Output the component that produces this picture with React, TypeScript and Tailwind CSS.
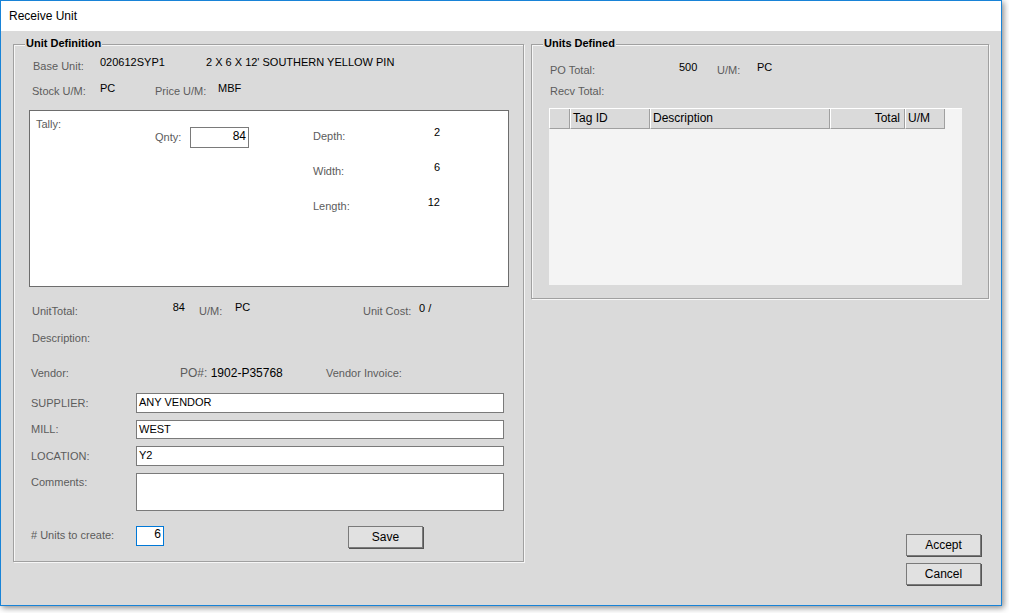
import React from "react";

const LABEL = "text-[#5c5c5c]";

function GroupBox({ title, className = "", children }: { title: string; className?: string; children: React.ReactNode }) {
  return (
    <div className={`relative border border-[#a0a0a0] shadow-[inset_1px_1px_0_#f6f6f6,1px_1px_0_#f6f6f6] ${className}`}>
      <span className="absolute left-[11px] top-[-8px] px-[1px] bg-[#dadada] font-bold text-black">{title}</span>
      {children}
    </div>
  );
}

function TextBox({ value, className = "", align = "left" }: { value?: string; className?: string; align?: "left" | "right" }) {
  return (
    <div
      className={`bg-white border border-[#7a7a7a] px-[2px] pt-[2px] text-black ${align === "right" ? "text-right" : ""} ${className}`}
    >
      {value}
    </div>
  );
}

function Button({ label, className = "" }: { label: string; className?: string }) {
  return (
    <button className={`w-[75px] bg-[#e1e1e1] border border-[#7a7a7a] shadow-[1px_1px_0_#555] text-[12px] text-black flex items-center justify-center ${className}`}>
      {label}
    </button>
  );
}

function FieldRow({ label, value, h, mt = "" }: { label: string; value?: string; h: string; mt?: string }) {
  return (
    <div className={`flex items-center pl-[17px] ${mt}`}>
      <span className={`${LABEL} w-[105px]`}>{label}</span>
      <TextBox value={value} className={`w-[368px] ${h}`} />
    </div>
  );
}

function UnitDefinition() {
  return (
    <GroupBox title="Unit Definition" className="w-[511px] h-[518px] pt-[11px]">
      {/* base unit */}
      <div className="flex items-start h-[26px] pl-[19px]">
        <span className={`${LABEL} w-[67px] mt-[4px]`}>Base Unit:</span>
        <span className="w-[106px]">020612SYP1</span>
        <span className="whitespace-nowrap">2 X 6 X 12' SOUTHERN YELLOW PIN</span>
      </div>
      <div className="flex items-start h-[28px] pl-[18px]">
        <span className={`${LABEL} w-[68px] mt-[3px]`}>Stock U/M:</span>
        <span className="w-[55px]">PC</span>
        <span className={`${LABEL} w-[63px] mt-[3px]`}>Price U/M:</span>
        <span>MBF</span>
      </div>

      {/* tally panel */}
      <div className="ml-[15px] w-[480px] h-[177px] bg-white border border-[#6d6d6d] flex items-start">
        <span className={`${LABEL} w-[125px] pl-[6px] pt-[7px]`}>Tally:</span>
        <div className="flex items-center pt-[16px]">
          <span className={`${LABEL} w-[35px]`}>Qnty:</span>
          <TextBox value="84" align="right" className="w-[59px] h-[21px] text-[12px] pt-[1px]" />
        </div>
        <div className="ml-[64px] pt-[15px] flex flex-col">
          {[
            ["Depth:", "2"],
            ["Width:", "6"],
            ["Length:", "12"],
          ].map(([l, v]) => (
            <div key={l} className="flex justify-between items-start w-[127px] h-[35px]">
              <span className={`${LABEL} mt-[4px]`}>{l}</span>
              <span>{v}</span>
            </div>
          ))}
        </div>
      </div>

      {/* totals */}
      <div className="flex items-start h-[31px] mt-[14px] pl-[18px]">
        <span className={`${LABEL} w-[133px] mt-[4px]`}>UnitTotal:</span>
        <span className="w-[20px] text-right">84</span>
        <span className={`${LABEL} w-[36px] ml-[14px] mt-[4px]`}>U/M:</span>
        <span className="w-[128px]">PC</span>
        <span className={`${LABEL} w-[56px] mt-[4px]`}>Unit Cost:</span>
        <span className="mt-[1px]">0 /</span>
      </div>
      <div className="h-[35px] pl-[18px]">
        <span className={LABEL}>Description:</span>
      </div>
      <div className="flex items-start h-[26px] pl-[17px]">
        <span className={`${LABEL} w-[149px]`}>Vendor:</span>
        <span className="w-[146px] text-[12px] leading-[13px]">
          <span className={LABEL}>PO#: </span>1902-P35768
        </span>
        <span className={LABEL}>Vendor Invoice:</span>
      </div>

      {/* reference fields */}
      <FieldRow label="SUPPLIER:" value="ANY VENDOR" h="h-[20px]" />
      <FieldRow label="MILL:" value="WEST" h="h-[19px]" mt="mt-[7px]" />
      <FieldRow label="LOCATION:" value="Y2" h="h-[20px]" mt="mt-[7px]" />
      <div className="flex items-start pl-[17px] mt-[7px]">
        <span className={`${LABEL} w-[105px] mt-[3px]`}>Comments:</span>
        <TextBox className="w-[368px] h-[38px]" />
      </div>

      <div className="flex items-start h-[23px] mt-[15px] pl-[17px]">
        <span className={`${LABEL} w-[105px] mt-[3px]`}>
          # Units to create:
        </span>
        <div className="w-[28px] h-[20px] bg-white border border-[#0078d7] text-right pr-[2px] pt-[1px] text-[12px]">6</div>
        <Button label="Save" className="ml-[184px] h-[22px]" />
      </div>
    </GroupBox>
  );
}

const COLUMNS = [
  { label: "", w: "w-[21px]", align: "" },
  { label: "Tag ID", w: "w-[80px]", align: "" },
  { label: "Description", w: "w-[180px]", align: "" },
  { label: "Total", w: "w-[75px]", align: "text-right pr-[4px]" },
  { label: "U/M", w: "w-[40px]", align: "" },
];

function UnitsDefined() {
  return (
    <GroupBox title="Units Defined" className="w-[458px] h-[255px] pt-[16px]">
      <div className="flex items-start h-[21px] pl-[18px]">
        <span className={`${LABEL} w-[129px] mt-[3px]`}>PO Total:</span>
        <span className="w-[38px]">500</span>
        <span className={`${LABEL} w-[40px] mt-[3px]`}>U/M:</span>
        <span>PC</span>
      </div>
      <div className="h-[26px] pl-[18px] pt-[3px]">
        <span className={LABEL}>Recv Total:</span>
      </div>
      <div className="ml-[17px] w-[413px] h-[177px] bg-[#f4f4f4] border-t border-white">
        <div className="flex h-[20px]">
          {COLUMNS.map((c, i) => (
            <div
              key={i}
              className={`${c.w} h-full bg-[#dadada] border-r border-b border-[#a0a0a0] border-l border-l-white pl-[2px] text-[12px] leading-[18px] ${c.align}`}
            >
              {c.label}
            </div>
          ))}
        </div>
      </div>
    </GroupBox>
  );
}

export default function App() {
  return (
    <div className="w-[1009px] h-[613px] bg-white font-['Liberation_Sans',Arial,sans-serif] text-[11px] leading-[13px] text-black">
      <div className="w-[1002px] h-[606px] border border-[#1883d7] shadow-[2px_2px_6px_rgba(0,0,0,0.45)] flex flex-col">
        <div className="h-[30px] bg-white flex items-center pl-[8px] text-[12px]">Receive Unit</div>
        <div className="flex-1 bg-[#dadada] flex items-start pt-[13px] pl-[12px]">
          <UnitDefinition />
          <div className="ml-[7px] flex flex-col">
            <UnitsDefined />
            <Button label="Accept" className="ml-[375px] mt-[235px] h-[22px]" />
            <Button label="Cancel" className="ml-[375px] mt-[7px] h-[22px]" />
          </div>
        </div>
      </div>
    </div>
  );
}
